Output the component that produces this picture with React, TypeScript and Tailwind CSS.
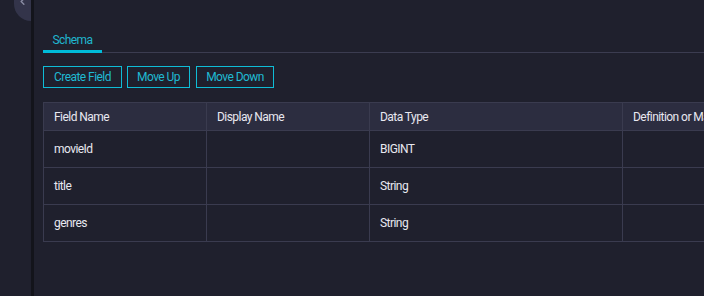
import { ChevronLeft } from "lucide-react";

const fields = [
    { name: "movieId", display: "", type: "BIGINT", def: "" },
    { name: "title", display: "", type: "String", def: "" },
    { name: "genres", display: "", type: "String", def: "" },
];

const cols = ["w-[163px]", "w-[163px]", "w-[253px]", "w-[200px]"];

export default function App() {
    return (
        <div className="flex h-[296px] w-[704px] overflow-hidden bg-[#1f202d] text-[12px] tracking-[-0.55px] text-[#e8e8f0]" style={{ fontFamily: "Roboto, 'Liberation Sans', sans-serif" }}>
            {/* collapsed sidebar */}
            <div className="relative w-[31px] shrink-0 bg-[#1f202d]">
                <button className="absolute right-0 top-[-16px] flex h-[37px] w-[17px] items-end justify-center rounded-bl-[18px] rounded-tl-[18px] bg-[#33344a] pb-[14px] text-[#8a8ca3]">
                    <ChevronLeft size={11} strokeWidth={3} />
                </button>
            </div>
            <div className="w-[3px] shrink-0 bg-[#13141b]" />

            <main className="min-w-0 flex-1 overflow-hidden pl-[9px] pt-[32px]">
                {/* tabs */}
                <div className="flex border-b border-[#3b3c50]">
                    <div className="-mb-px w-[59px] border-b-[3px] border-[#00bcd9] pb-[2px] text-center leading-[16px] text-[#1fb6cf]">
                        Schema
                    </div>
                </div>

                {/* actions */}
                <div className="mt-[13px] flex gap-[5px]">
                    <button className="h-[22px] w-[79px] border border-[#0fbcd6] leading-[20px] text-[#1fbad2]">Create Field</button>
                    <button className="h-[22px] w-[63px] border border-[#0fbcd6] leading-[20px] text-[#1fbad2]">Move Up</button>
                    <button className="ml-px h-[22px] w-[78px] border border-[#0fbcd6] leading-[20px] text-[#1fbad2]">Move Down</button>
                </div>

                {/* schema table */}
                <table className="mt-[14px] w-[779px] table-fixed border-collapse">
                    <thead>
                        <tr className="h-[28px] bg-[#2c2d40]">
                            {["Field Name", "Display Name", "Data Type", "Definition or Mapping"].map((h, i) => (
                                <th key={h} className={`${cols[i]} whitespace-nowrap border border-[#3a3b4f] px-[10px] text-left font-normal`}>
                                    {h}
                                </th>
                            ))}
                        </tr>
                    </thead>
                    <tbody>
                        {fields.map((f) => (
                            <tr key={f.name} className="h-[37px]">
                                <td className="border border-[#3a3b4f] px-[10px]">{f.name}</td>
                                <td className="border border-[#3a3b4f] px-[10px]">{f.display}</td>
                                <td className="border border-[#3a3b4f] px-[10px]">{f.type}</td>
                                <td className="border border-[#3a3b4f] px-[10px]">{f.def}</td>
                            </tr>
                        ))}
                    </tbody>
                </table>
            </main>
        </div>
    );
}
